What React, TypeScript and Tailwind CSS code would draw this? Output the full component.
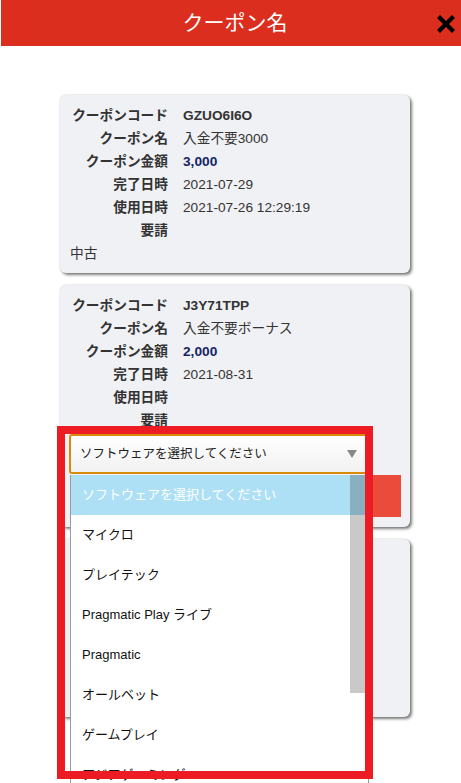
import React from "react";

type Row = { label: string; value?: string; kind?: "code" | "amount" | "plain" };

const card1: Row[] = [
  { label: "クーポンコード", value: "GZUO6I6O", kind: "code" },
  { label: "クーポン名", value: "入金不要3000" },
  { label: "クーポン金額", value: "3,000", kind: "amount" },
  { label: "完了日時", value: "2021-07-29" },
  { label: "使用日時", value: "2021-07-26 12:29:19" },
  { label: "要請", value: "" },
];

const card2: Row[] = [
  { label: "クーポンコード", value: "J3Y71TPP", kind: "code" },
  { label: "クーポン名", value: "入金不要ボーナス" },
  { label: "クーポン金額", value: "2,000", kind: "amount" },
  { label: "完了日時", value: "2021-08-31" },
  { label: "使用日時", value: "" },
  { label: "要請", value: "" },
];

const options = [
  "ソフトウェアを選択してください",
  "マイクロ",
  "プレイテック",
  "Pragmatic Play ライブ",
  "Pragmatic",
  "オールベット",
  "ゲームプレイ",
  "アジアゲーミング",
];

function Rows({ rows }: { rows: Row[] }) {
  return (
    <div className="grid grid-cols-[98px_1fr] gap-x-[15px] leading-[23px] text-[13.7px] text-[#333]">
      {rows.map((r, i) => (
        <React.Fragment key={i}>
          <div className="text-right font-bold whitespace-nowrap">{r.label}</div>
          <div
            className={
              r.kind === "code"
                ? "font-bold text-[#333]"
                : r.kind === "amount"
                ? "font-bold text-[#152466]"
                : "text-[#333]"
            }
          >
            {r.value}
          </div>
        </React.Fragment>
      ))}
    </div>
  );
}

const cardCls =
  "w-[350px] rounded-[6px] bg-[#f0f1f4] px-[10px] shadow-[2px_2px_3px_rgba(0,0,0,0.5),0_0_2px_rgba(0,0,0,0.18)]";

export default function App() {
  return (
    <div className="relative h-[783px] w-[461px] overflow-hidden bg-white font-['Liberation_Sans','Noto_Sans_CJK_JP',sans-serif]">
      <header className="ml-px grid h-[46px] grid-cols-[1fr_auto_1fr] items-center bg-[#db2e1e]">
        <div />
        <h1 className="pl-[8px] text-[21px] font-normal text-white">クーポン名</h1>
        <div className="flex justify-end pr-[6px]">
          <svg width="18" height="18" viewBox="0 0 18 18" className="mt-[1px]">
            <path d="M3 3 L15 15 M15 3 L3 15" stroke="#000" strokeWidth="4.2" strokeLinecap="square" />
          </svg>
        </div>
      </header>

      <main className="flex flex-col gap-[12px] pl-[60px] pt-[49px]">
        <div className={`${cardCls} pt-[9px] pb-[8px]`}>
          <Rows rows={card1} />
          <div className="leading-[23px] text-[13.7px] text-[#333]">中古</div>
        </div>

        <div className={`${cardCls} pt-[9px] pb-[10px]`}>
          <Rows rows={card2} />
          <div className="-ml-px mt-[2px] flex h-[40px] w-[300px] items-center justify-between rounded-[3px] border-2 border-[#d98c0a] bg-gradient-to-b from-white to-[#f1f1f1] pl-[9px] pr-[10px] text-[12.5px] text-[#222]">
            <span>ソフトウェアを選択してください</span>
            <svg width="10" height="8" viewBox="0 0 10 8">
              <path d="M0 0 L10 0 L5 8 Z" fill="#888" />
            </svg>
          </div>
          <div className="mt-px h-[42px] w-[331px] bg-[#ea4b3b]" />
        </div>

        <div className={`${cardCls} h-[178px]`} />
      </main>

      {/* open dropdown list */}
      <div className="absolute left-[70px] top-[475px] w-[299px] border-x border-[#999] bg-white">
        {options.map((o, i) => (
          <div
            key={o}
            className={
              i === 0
                ? "flex h-[40px] items-center bg-[#ade0f5] pl-[11px] text-[13px] text-white"
                : "flex h-[40px] items-center pl-[11px] text-[13px] text-[#111]"
            }
          >
            {o}
          </div>
        ))}
        <div className="absolute right-0 top-0 h-[218px] w-[18px] bg-[rgba(0,0,0,0.21)]" />
      </div>

      {/* annotation frame */}
      <div className="absolute left-[57px] top-[426px] h-[353px] w-[316px] border-[8px] border-[#ed1c24]" />
    </div>
  );
}
